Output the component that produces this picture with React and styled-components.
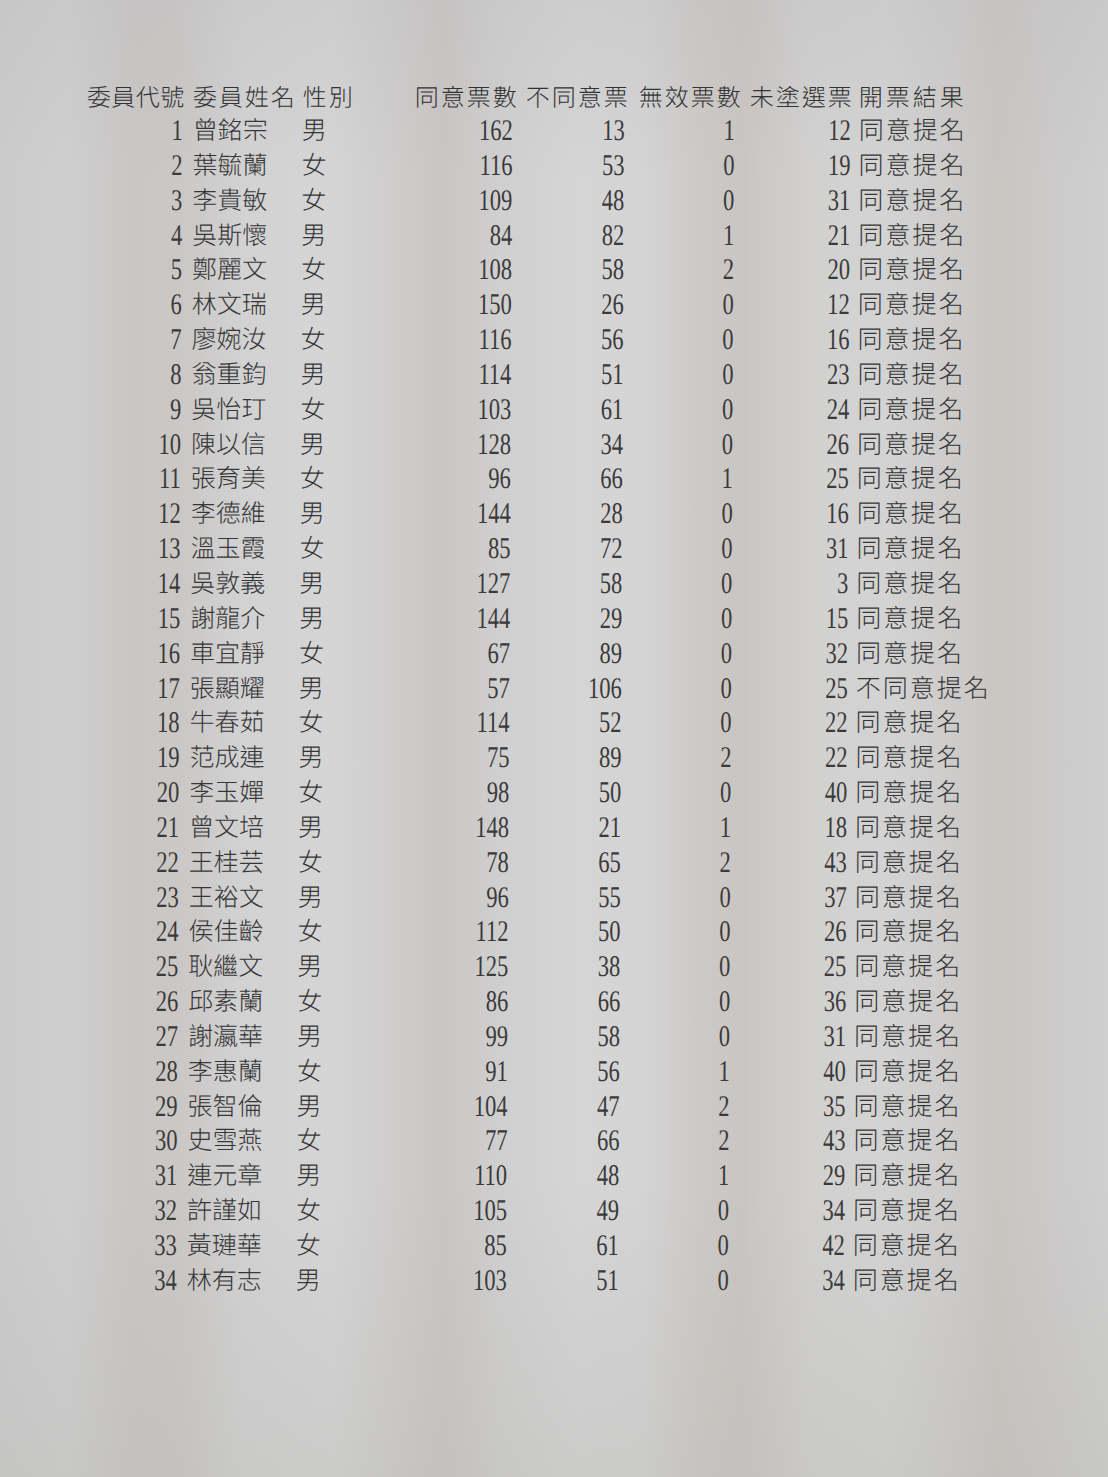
import React from "react";
import styled, { createGlobalStyle } from "styled-components";

const GlobalStyle = createGlobalStyle`
  html, body { margin: 0; padding: 0; }
  body {
    background-color: #d1d1d2;
    font-family: "Noto Sans CJK TC", "Noto Sans CJK SC", sans-serif;
  }
  #root { min-height: 100vh; }
`;

const Paper = styled.div`
  width: 1108px;
  height: 1477px;
  overflow: hidden;
  box-sizing: border-box;
  padding: 80px 0 0 87px;
  background:
    linear-gradient(180deg, rgba(190,190,192,0.35) 0%, rgba(255,255,255,0) 12%, rgba(255,255,255,0) 80%, rgba(185,185,180,0.35) 100%),
    linear-gradient(90deg,
      #cbcbcc 0%, #cfcfd0 6%, #c9c6c4 12%, #cac7c5 16%, #d2d2d3 22%,
      #d5d5d6 30%, #cecccb 36%, #c9c5c3 40%, #d0cfcf 45%, #d5d5d6 52%,
      #d4d4d5 58%, #cdc9c6 63%, #c9c5c2 67%, #d2d1d0 73%, #d3d3d3 80%,
      #cecccb 86%, #c9c5c1 90%, #cccaca 95%, #cfcfcf 100%);
`;

const Table = styled.div`
  display: grid;
  grid-template-columns: 106px 109px 58px 157px 111px 113px 111px auto;
  grid-template-rows: 31px;
  grid-auto-rows: 34.85px;
  color: #363636;
  transform: skewX(-0.3deg);
  transform-origin: 0 0;
`;

const HeadCell = styled.div`
  font-family: "Noto Sans CJK TC", "Noto Sans CJK SC", sans-serif;
  font-weight: 300;
  font-size: 24px;
  letter-spacing: ${(p) => (p.$ls == null ? 2 : p.$ls)}px;
  line-height: 31px;
  white-space: nowrap;
  text-align: ${(p) => p.$align || "right"};
  padding-left: ${(p) => p.$pl || 0}px;
  margin-right: ${(p) => (p.$align === "left" ? 0 : -2)}px;
  color: #333;
`;

const NumCell = styled.div`
  text-align: right;
  padding-right: ${(p) => p.$pr || 0}px;
  line-height: 34.85px;
  white-space: nowrap;
`;

const Num = styled.span`
  display: inline-block;
  font-family: "Liberation Serif", "Times New Roman", serif;
  font-size: 30px;
  color: #3a3a3a;
  transform: translateY(2px) scaleX(0.75);
  transform-origin: 100% 50%;
`;

const TextCell = styled.div`
  font-family: "Noto Sans CJK TC", "Noto Sans CJK SC", sans-serif;
  font-weight: 300;
  font-size: 25px;
  letter-spacing: ${(p) => p.$ls || 0}px;
  line-height: 34.85px;
  white-space: nowrap;
  padding-left: ${(p) => p.$pl || 0}px;
  color: #363636;
`;

const rows = [
  [1, "曾銘宗", "男", 162, 13, 1, 12, "同意提名"],
  [2, "葉毓蘭", "女", 116, 53, 0, 19, "同意提名"],
  [3, "李貴敏", "女", 109, 48, 0, 31, "同意提名"],
  [4, "吳斯懷", "男", 84, 82, 1, 21, "同意提名"],
  [5, "鄭麗文", "女", 108, 58, 2, 20, "同意提名"],
  [6, "林文瑞", "男", 150, 26, 0, 12, "同意提名"],
  [7, "廖婉汝", "女", 116, 56, 0, 16, "同意提名"],
  [8, "翁重鈞", "男", 114, 51, 0, 23, "同意提名"],
  [9, "吳怡玎", "女", 103, 61, 0, 24, "同意提名"],
  [10, "陳以信", "男", 128, 34, 0, 26, "同意提名"],
  [11, "張育美", "女", 96, 66, 1, 25, "同意提名"],
  [12, "李德維", "男", 144, 28, 0, 16, "同意提名"],
  [13, "溫玉霞", "女", 85, 72, 0, 31, "同意提名"],
  [14, "吳敦義", "男", 127, 58, 0, 3, "同意提名"],
  [15, "謝龍介", "男", 144, 29, 0, 15, "同意提名"],
  [16, "車宜靜", "女", 67, 89, 0, 32, "同意提名"],
  [17, "張顯耀", "男", 57, 106, 0, 25, "不同意提名"],
  [18, "牛春茹", "女", 114, 52, 0, 22, "同意提名"],
  [19, "范成連", "男", 75, 89, 2, 22, "同意提名"],
  [20, "李玉嬋", "女", 98, 50, 0, 40, "同意提名"],
  [21, "曾文培", "男", 148, 21, 1, 18, "同意提名"],
  [22, "王桂芸", "女", 78, 65, 2, 43, "同意提名"],
  [23, "王裕文", "男", 96, 55, 0, 37, "同意提名"],
  [24, "侯佳齡", "女", 112, 50, 0, 26, "同意提名"],
  [25, "耿繼文", "男", 125, 38, 0, 25, "同意提名"],
  [26, "邱素蘭", "女", 86, 66, 0, 36, "同意提名"],
  [27, "謝瀛華", "男", 99, 58, 0, 31, "同意提名"],
  [28, "李惠蘭", "女", 91, 56, 1, 40, "同意提名"],
  [29, "張智倫", "男", 104, 47, 2, 35, "同意提名"],
  [30, "史雪燕", "女", 77, 66, 2, 43, "同意提名"],
  [31, "連元章", "男", 110, 48, 1, 29, "同意提名"],
  [32, "許謹如", "女", 105, 49, 0, 34, "同意提名"],
  [33, "黃璉華", "女", 85, 61, 0, 42, "同意提名"],
  [34, "林有志", "男", 103, 51, 0, 34, "同意提名"],
];

export default function App() {
  return (
    <>
      <GlobalStyle />
      <Paper>
        <Table>
          <HeadCell $align="left" $ls={0.5}>委員代號</HeadCell>
          <HeadCell $align="left">委員姓名</HeadCell>
          <HeadCell $align="left" $pl={1}>性別</HeadCell>
          <HeadCell>同意票數</HeadCell>
          <HeadCell>不同意票</HeadCell>
          <HeadCell>無效票數</HeadCell>
          <HeadCell>未塗選票</HeadCell>
          <HeadCell $align="left" $pl={7} $ls={3}>開票結果</HeadCell>
          {rows.map(([id, name, sex, agree, disagree, invalid, blank, result]) => (
            <React.Fragment key={id}>
              <NumCell $pr={10}><Num>{id}</Num></NumCell>
              <TextCell>{name}</TextCell>
              <TextCell>{sex}</TextCell>
              <NumCell $pr={4}><Num>{agree}</Num></NumCell>
              <NumCell $pr={3}><Num>{disagree}</Num></NumCell>
              <NumCell $pr={6}><Num>{invalid}</Num></NumCell>
              <NumCell $pr={1}><Num>{blank}</Num></NumCell>
              <TextCell $pl={7} $ls={2}>{result}</TextCell>
            </React.Fragment>
          ))}
        </Table>
      </Paper>
    </>
  );
}
